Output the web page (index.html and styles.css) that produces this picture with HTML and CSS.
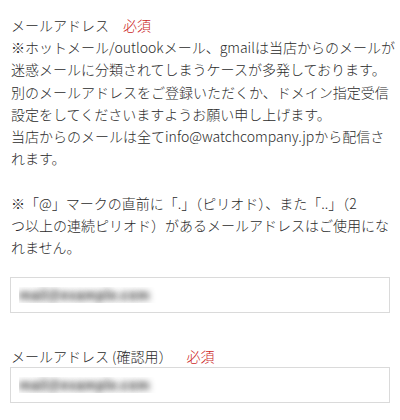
FILE: index.html
```html
<!DOCTYPE html>
<html lang="ja">
<head>
<meta charset="utf-8">
<link rel="stylesheet" href="styles.css">
</head>
<body>
<form class="form">
  <div class="field">
    <div class="label">メールアドレス<span class="req">必須</span></div>
    <p class="note">※ホットメール/outlookメール、gmailは当店からのメールが<br>迷惑メールに分類されてしまうケースが多発しております。<br>別のメールアドレスをご登録いただくか、ドメイン指定受信<br>設定をしてくださいますようお願い申し上げます。<br>当店からのメールは全てinfo@watchcompany.jpから配信さ<br>れます。<br><br>※「@」マークの直前に「.」（ピリオド）、また「..」（2<br>つ以上の連続ピリオド）があるメールアドレスはご使用にな<br>れません。</p>
    <input class="input first" type="text" value="mail@example.com">
  </div>
  <div class="field second">
    <div class="label">メールアドレス (確認用）<span class="req">必須</span></div>
    <input class="input" type="text" value="mail@example.com">
  </div>
</form>
</body>
</html>
```

FILE: styles.css
```css
html, body {
  margin: 0;
  padding: 0;
  background: #ffffff;
}

.form {
  padding: 14px 0 0 10px;
  width: 385px;
  font-family: "Noto Sans CJK JP", "Noto Sans", sans-serif;
  font-weight: 300;
  font-size: 14px;
  line-height: 22.2px;
  color: #2b2b2b;
}

.field {
  display: flex;
  flex-direction: column;
  align-items: flex-start;
}

.second {
  margin-top: 32px;
}

.label {
  padding-left: 1px;
}

.req {
  color: #cc1f1f;
  margin-left: 14px;
}

.note {
  margin: 0;
  padding-left: 1px;
  white-space: nowrap;
}

.input {
  box-sizing: border-box;
  width: 380px;
  height: 36px;
  margin: 0;
  padding: 0 8px;
  border: 1px solid #dadada;
  border-radius: 0;
  background: #ffffff;
  font-family: "Liberation Sans", Arial, sans-serif;
  font-size: 14px;
  font-weight: 700;
  color: transparent;
  text-shadow: 0 0 6px rgba(50, 50, 50, 0.95);
  outline: none;
}

.first {
  margin-top: 19px;
}
```
